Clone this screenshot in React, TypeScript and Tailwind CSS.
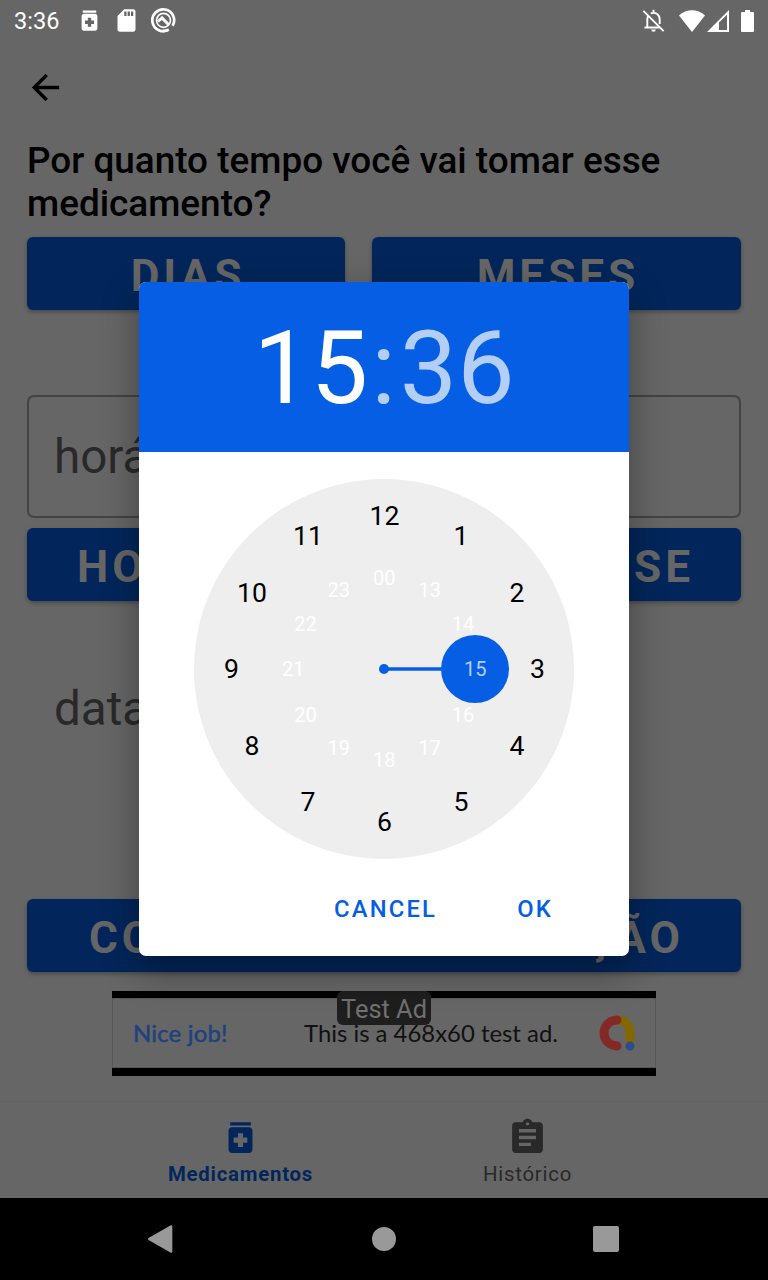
import React from "react";

const BLUE = "#055ee3";

const medicationPath =
  "M6 3h12v2H6zm11 3H7c-1.1 0-2 .9-2 2v11c0 1.1.9 2 2 2h10c1.1 0 2-.9 2-2V8c0-1.1-.9-2-2-2zm-1 9h-2.5v2.5h-3V15H8v-3h2.5V9.5h3V12H16v3z";

function Icon({ d, className }: { d: string; className: string }) {
  return (
    <svg viewBox="0 0 24 24" fill="currentColor" className={className}>
      <path d={d} />
    </svg>
  );
}

function StatusBar() {
  return (
    <div className="flex h-[41px] shrink-0 items-center text-white">
      <span className="ml-[14px] w-[62px] pt-[3px] text-[23.6px] leading-none">3:36</span>
      <Icon d={medicationPath} className="size-[27px]" />
      <Icon
        d="M18 2h-8L4.02 8 4 20c0 1.1.9 2 2 2h12c1.1 0 2-.9 2-2V4c0-1.1-.9-2-2-2zm-6 6h-2V4h2v4zm3 0h-2V4h2v4zm3 0h-2V4h2v4z"
        className="ml-[10px] size-[27px]"
      />
      <svg viewBox="0 0 27 27" className="ml-[10px] size-[27px]" fill="none" stroke="currentColor">
        <path d="M18.8 22.6A10.9 10.9 0 1 1 22.6 18.800M22.600 18.800" strokeWidth="2.7" />
        <path d="M18.200 22.900A10.900 10.900 0 0 1 13 24.200" strokeWidth="2.7" />
        <circle cx="13.500" cy="13.300" r="7" strokeWidth="1.700" />
        <path d="M8 14.500l4-3.600 6.500 6.600" strokeWidth="3" />
      </svg>
      <svg viewBox="0 0 24 24" className="ml-auto size-[27px]" fill="none" stroke="currentColor" strokeWidth="1.7">
        <path d="M3 3.5L21 21.5M4 18.2h14M6.5 18V11c0-1.2.3-2.3.8-3.2M9.5 5.7C14 4 17.5 7 17.5 11v4M12 2.5v2.5" />
        <path d="M10 20h4a2 2 0 0 1-4 0z" fill="currentColor" stroke="none" />
      </svg>
      <svg viewBox="0 0 26 22" className="ml-[12px] h-[22px] w-[26px]" fill="currentColor">
        <path d="M0 5.5C7-1.4 19-1.4 26 5.5L13 22z" />
      </svg>
      <svg viewBox="0 0 22 22" className="ml-[2px] h-[22px] w-[22px]" fill="currentColor">
        <path fillRule="evenodd" d="M0 22L22 0v22zM12 12.5V20h8V4.8z" />
      </svg>
      <svg viewBox="0 0 13 22" className="mr-[14px] ml-[12px] h-[22px] w-[13px]" fill="currentColor">
        <path d="M4 0h5v2h3q1 0 1 1v18q0 1-1 1H1q-1 0-1-1V3q0-1 1-1h3z" />
      </svg>
    </div>
  );
}

const buttonClass =
  "flex h-[73px] items-center rounded-[6px] bg-[#02265b] pt-[5px] text-[44.2px] leading-none font-bold tracking-[3.95px] text-[#666] shadow-[0_2px_4px_rgba(0,0,0,0.3)]";

function Form() {
  return (
    <div className="flex flex-col px-[27px]">
      <h1 className="mt-[3px] text-[36.9px] leading-[43px] font-medium text-black">
        Por quanto tempo você vai tomar esse
        <br />
        medicamento?
      </h1>
      <div className="mt-[12px] flex gap-[27px]">
        <div className={buttonClass + " w-[318px] justify-center pl-[4px]"}>DIAS</div>
        <div className={buttonClass + " flex-1 justify-center pl-[3px]"}>MESES</div>
      </div>
      <div className="mt-[85px] flex h-[123px] items-center rounded-[7px] border-2 border-[#434343] pt-[2px] pl-[25px] text-[47.6px] text-[#292929]">
        horário
      </div>
      <div className={buttonClass + " mt-[10px] justify-between pr-[47px] pl-[50px]"}>
        <span>HO</span>
        <span>SE</span>
      </div>
      <div className="mt-[46px] flex h-[123px] items-center pt-[2px] pl-[27px] text-[47.6px] text-[#292929]">data</div>
      <div className={buttonClass + " mt-[129px] justify-between pr-[57px] pl-[62px]"}>
        <span>CO</span>
        <span>ÇÃO</span>
      </div>
    </div>
  );
}

function AdBanner() {
  return (
    <div className="relative mx-auto mt-[19px] h-[85px] w-[544px] shrink-0 border-t-[7px] border-b-8 border-black font-['Lato',sans-serif]">
      <div className="flex h-full items-center border border-[#575757] pl-[20px] text-[23.9px]">
        <span className="w-[171px] tracking-[0.2px] text-[#1f417f] [-webkit-text-stroke:0.5px_#1f417f]">Nice job!</span>
        <span className="w-[295px] text-[#111]">This is a 468x60 test ad.</span>
        <svg viewBox="0 0 36 36" className="size-[36px]" fill="none" strokeWidth="9" strokeLinecap="round">
          <path d="M18 5C26 5 31 10 31 18v13" stroke="#846700" />
          <path d="M18 5a13 13 0 1 0 0 26" stroke="#842a26" />
          <circle cx="31" cy="31" r="4.5" fill="#294d90" />
        </svg>
      </div>
      <div className="absolute -top-[7px] left-[225px] flex h-[34px] w-[94px] items-center justify-center rounded-[6px] bg-[#1e1e1e] pt-[3px] font-['Roboto',sans-serif] text-[25.4px] text-[#707070]">
        Test Ad
      </div>
    </div>
  );
}

function BottomNav() {
  return (
    <div className="mt-auto flex h-[97px] shrink-0 justify-center border-t border-[#626262] text-[20.4px] leading-none">
      <div className="flex w-[287px] flex-col items-center pt-[15px] font-bold text-[#02265b]">
        <Icon d={medicationPath} className="size-[41px]" />
        <span className="mt-[6px] tracking-[0.75px]">Medicamentos</span>
      </div>
      <div className="flex w-[287px] flex-col items-center pt-[15px] text-[#292929]">
        <Icon
          d="M19 3h-4.18C14.4 1.84 13.3 1 12 1c-1.3 0-2.4.84-2.82 2H5c-1.1 0-2 .9-2 2v14c0 1.1.9 2 2 2h14c1.1 0 2-.9 2-2V5c0-1.1-.9-2-2-2zm-7 0c.55 0 1 .45 1 1s-.45 1-1 1-1-.45-1-1 .45-1 1-1zm2 14H7v-2h7v2zm3-4H7v-2h10v2zm0-4H7V7h10v2z"
          className="size-[41px]"
        />
        <span className="mt-[6px] tracking-[0.75px]">Histórico</span>
      </div>
    </div>
  );
}

function SystemNav() {
  return (
    <div className="flex h-[82px] shrink-0 items-center bg-black text-[#999]">
      <svg viewBox="0 0 26 28" className="ml-[147px] h-[28px] w-[26px]" fill="currentColor">
        <path d="M1.5 13 23.8.3Q25.3-.2 25.3 1.5v25q0 1.7-1.5 1.2L1.5 15Q.5 14 1.5 13z" />
      </svg>
      <div className="ml-[199px] size-[24px] rounded-full bg-[#999]" />
      <div className="ml-[197px] size-[26px] rounded-[2px] bg-[#999]" />
    </div>
  );
}

function ClockFace() {
  const hours = Array.from({ length: 12 }, (_, i) => i);
  const place = (i: number, r: number) => ({
    x: 190 + r * Math.sin((i * Math.PI) / 6),
    y: 190 - r * Math.cos((i * Math.PI) / 6),
  });
  return (
    <svg viewBox="0 0 380 380" className="mx-auto mt-[27px] size-[380px]" textAnchor="middle">
      <circle cx="190" cy="190" r="190" fill="#eee" />
      <path d="M190 190H260" stroke={BLUE} strokeWidth="3.4" />
      <circle cx="190" cy="190" r="5" fill={BLUE} />
      <circle cx="281" cy="190" r="34" fill={BLUE} />
      {hours.map((i) => {
        const p = place(i, 153);
        return (
          <text key={i} x={p.x + 0.5} y={p.y + 9} fontSize="26.6" fill="#000">
            {i === 0 ? "12" : i}
          </text>
        );
      })}
      {hours.map((i) => {
        const p = place(i, 91);
        return (
          <text key={i} x={p.x + 0.3} y={p.y + 7} fontSize="20" fill={i === 3 ? "#b4cff7" : "#fff"}>
            {i === 0 ? "00" : i + 12}
          </text>
        );
      })}
    </svg>
  );
}

function TimeDialog() {
  return (
    <div className="absolute top-[282px] left-[139px] flex h-[674px] w-[490px] flex-col overflow-hidden rounded-[7px] bg-white shadow-[0_14px_36px_2px_rgba(0,0,0,0.33)]">
      <div className="flex h-[170px] items-center justify-center bg-[#055ee3] pt-[2px] text-[102px] leading-none text-[#b4cff7]">
        <span className="text-white">15</span>
        <span className="mr-[4px] ml-[3px]">:</span>
        <span>36</span>
      </div>
      <ClockFace />
      <div className="mt-[38px] flex justify-end pr-[76px] text-[23.8px] leading-[24px] font-medium tracking-[2.2px] text-[#055ee3]">
        <span className="mr-[80px]">CANCEL</span>
        <span>OK</span>
      </div>
    </div>
  );
}

export default function App() {
  return (
    <div className="relative flex h-[1280px] w-[768px] flex-col overflow-hidden bg-[#666] font-['Roboto',sans-serif]">
      <StatusBar />
      <div className="flex h-[95px] shrink-0 pt-[26px] pl-[25px] text-black">
        <Icon d="M20 11H7.83l5.59-5.59L12 4l-8 8 8 8 1.41-1.41L7.83 13H20v-2z" className="size-[41px]" />
      </div>
      <Form />
      <AdBanner />
      <BottomNav />
      <SystemNav />
      <TimeDialog />
    </div>
  );
}
